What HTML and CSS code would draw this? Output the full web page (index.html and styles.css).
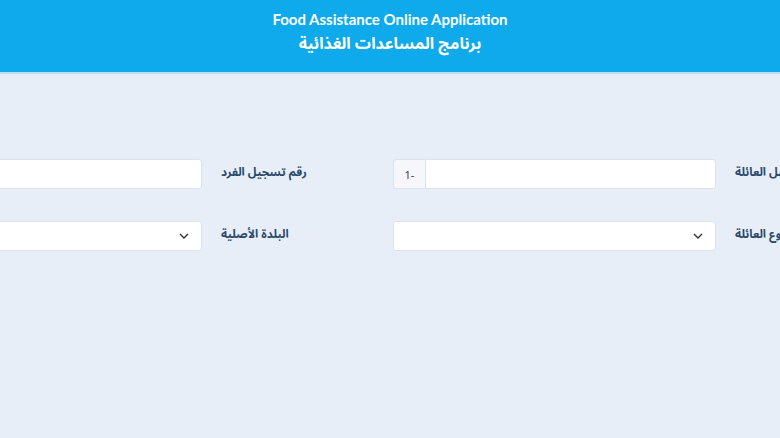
FILE: index.html
```html
<!DOCTYPE html>
<html lang="ar">
<head>
<meta charset="utf-8">
<title>Food Assistance Online Application</title>
<link rel="stylesheet" href="styles.css">
</head>
<body>
<header class="top">
  <div class="title-en">Food Assistance Online Application</div>
  <div class="title-ar" dir="rtl">برنامج المساعدات الغذائية</div>
</header>
<main class="page">
  <div class="form">
    <div class="row">
      <div class="group">
        <div class="control"><input class="field" type="text"></div>
        <label class="label" dir="rtl">رقم تسجيل الفرد</label>
      </div>
      <div class="group">
        <div class="control">
          <span class="prefix">1-</span>
          <input class="field field-joined" type="text">
        </div>
        <label class="label" dir="rtl">تسلسل العائلة</label>
      </div>
    </div>
    <div class="row">
      <div class="group">
        <div class="control">
          <div class="select"><svg class="chev" viewBox="0 0 10 6" width="10" height="6"><path d="M1 1l4 4 4-4" fill="none" stroke="#333" stroke-width="1.4"/></svg></div>
        </div>
        <label class="label" dir="rtl">البلدة الأصلية</label>
      </div>
      <div class="group">
        <div class="control">
          <div class="select"><svg class="chev" viewBox="0 0 10 6" width="10" height="6"><path d="M1 1l4 4 4-4" fill="none" stroke="#333" stroke-width="1.4"/></svg></div>
        </div>
        <label class="label" dir="rtl">نوع العائلة</label>
      </div>
    </div>
  </div>
</main>
</body>
</html>
```
FILE: styles.css
```css
html, body {
  margin: 0;
  padding: 0;
  height: 100%;
  overflow: hidden;
}
body {
  background: #e8eef8;
  font-family: "Noto Sans Arabic", "Noto Kufi Arabic", "Noto Sans", "DejaVu Sans", sans-serif;
}
.top {
  height: 74px;
  box-sizing: border-box;
  background: #0eaaeb;
  border-bottom: 2px solid #b9def5;
  color: #fff;
  display: flex;
  flex-direction: column;
  align-items: center;
  padding-top: 9px;
}
.title-en {
  font-family: Lato, "Noto Sans", sans-serif;
  font-weight: 700;
  font-size: 15px;
  line-height: 20px;
}
.title-ar {
  font-weight: 700;
  font-size: 16px;
  line-height: 26px;
  margin-top: 2px;
}
.page {
  display: flex;
  justify-content: center;
  padding-top: 85px;
  padding-left: 6px;
}
.form {
  display: flex;
  flex-direction: column;
  gap: 32px;
  flex: none;
}
.row {
  display: flex;
}
.group {
  width: 514px;
  display: flex;
  align-items: center;
  flex: none;
}
.control {
  width: 323px;
  height: 30px;
  display: flex;
  flex: none;
}
.field {
  flex: 1;
  min-width: 0;
  margin: 0;
  height: 30px;
  box-sizing: border-box;
  border: 1px solid #dde3ec;
  border-radius: 3px;
  background: #fff;
  outline: none;
}
.prefix {
  width: 32px;
  height: 30px;
  box-sizing: border-box;
  background: #f5f7fa;
  border: 1px solid #dde3ec;
  border-right: none;
  border-radius: 3px 0 0 3px;
  font-family: "Noto Sans", sans-serif;
  font-size: 11px;
  color: #444;
  display: flex;
  align-items: center;
  justify-content: center;
}
.field-joined {
  border-radius: 0 3px 3px 0;
}
.select {
  flex: 1;
  height: 30px;
  box-sizing: border-box;
  border: 1px solid #dde3ec;
  border-radius: 3px;
  background: #fff;
  display: flex;
  align-items: center;
  justify-content: flex-end;
  padding-right: 12px;
}
.label {
  margin-left: 19px;
  margin-top: -4px;
  font-size: 11.7px;
  font-weight: 700;
  color: #2a4a6b;
  white-space: nowrap;
  text-align: left;
}
```
